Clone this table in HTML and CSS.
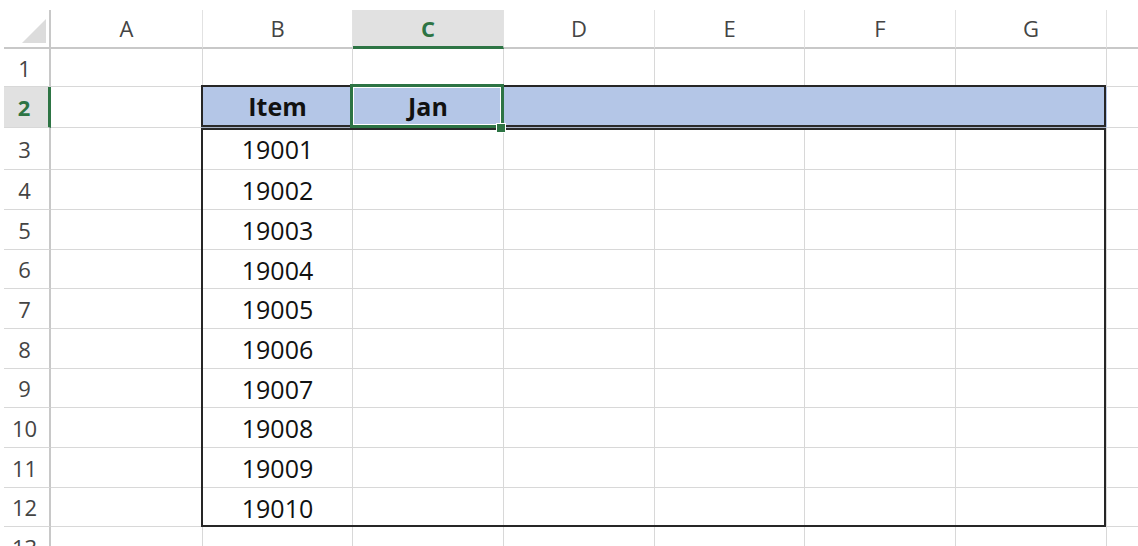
FILE: index.html
```html
<!DOCTYPE html>
<html>
<head>
<meta charset="utf-8">
<title>Sheet</title>
<link rel="stylesheet" href="styles.css">
</head>
<body>
<div class="sheet">
  <div class="grid">
    <div class="corner"><div class="tri"></div></div>
    <div class="ch">A</div><div class="ch">B</div><div class="ch sel">C</div><div class="ch">D</div><div class="ch">E</div><div class="ch">F</div><div class="ch">G</div><div class="ch"></div>

    <div class="rh">1</div><div class="c"></div><div class="c"></div><div class="c"></div><div class="c"></div><div class="c"></div><div class="c"></div><div class="c"></div><div class="c"></div>

    <div class="rh sel">2</div><div class="c"></div><div class="c th">Item</div><div class="c th">Jan</div><div class="c th"></div><div class="c th"></div><div class="c th"></div><div class="c th"></div><div class="c"></div>

    <div class="rh">3</div><div class="c"></div><div class="c num">19001</div><div class="c"></div><div class="c"></div><div class="c"></div><div class="c"></div><div class="c"></div><div class="c"></div>
    <div class="rh">4</div><div class="c"></div><div class="c num">19002</div><div class="c"></div><div class="c"></div><div class="c"></div><div class="c"></div><div class="c"></div><div class="c"></div>
    <div class="rh">5</div><div class="c"></div><div class="c num">19003</div><div class="c"></div><div class="c"></div><div class="c"></div><div class="c"></div><div class="c"></div><div class="c"></div>
    <div class="rh">6</div><div class="c"></div><div class="c num">19004</div><div class="c"></div><div class="c"></div><div class="c"></div><div class="c"></div><div class="c"></div><div class="c"></div>
    <div class="rh">7</div><div class="c"></div><div class="c num">19005</div><div class="c"></div><div class="c"></div><div class="c"></div><div class="c"></div><div class="c"></div><div class="c"></div>
    <div class="rh">8</div><div class="c"></div><div class="c num">19006</div><div class="c"></div><div class="c"></div><div class="c"></div><div class="c"></div><div class="c"></div><div class="c"></div>
    <div class="rh">9</div><div class="c"></div><div class="c num">19007</div><div class="c"></div><div class="c"></div><div class="c"></div><div class="c"></div><div class="c"></div><div class="c"></div>
    <div class="rh">10</div><div class="c"></div><div class="c num">19008</div><div class="c"></div><div class="c"></div><div class="c"></div><div class="c"></div><div class="c"></div><div class="c"></div>
    <div class="rh">11</div><div class="c"></div><div class="c num">19009</div><div class="c"></div><div class="c"></div><div class="c"></div><div class="c"></div><div class="c"></div><div class="c"></div>
    <div class="rh">12</div><div class="c"></div><div class="c num">19010</div><div class="c"></div><div class="c"></div><div class="c"></div><div class="c"></div><div class="c"></div><div class="c"></div>
    <div class="rh">13</div><div class="c"></div><div class="c"></div><div class="c"></div><div class="c"></div><div class="c"></div><div class="c"></div><div class="c"></div><div class="c"></div>
  </div>

  <div class="table-frame"></div>
  <div class="table-rule"></div>
  <div class="active-cell"></div>
  <div class="fill-handle"></div>
</div>
</body>
</html>
```

FILE: styles.css
```css
html, body {
  margin: 0;
  padding: 0;
  overflow: hidden;
  background: #ffffff;
  width: 1138px;
  height: 546px;
}

.sheet {
  position: relative;
  margin: 10px 0 0 4px;
  font-family: "Open Sans", "Liberation Sans", sans-serif;
}

.grid {
  display: grid;
  grid-template-columns: 47px 152px 150px 151px 151px 150px 151px 151px 40px;
  grid-template-rows: 39px 38px 41px 42px 40px 40px 39px 40px 40px 39px 40px 40px 39px 40px;
}

.grid > div {
  box-sizing: border-box;
  display: flex;
  align-items: center;
  justify-content: center;
  overflow: hidden;
  white-space: nowrap;
}

.corner {
  border-right: 2px solid #c8c8c8;
  border-bottom: 2px solid #c8c8c8;
  justify-content: flex-end !important;
  align-items: flex-end !important;
  padding: 0 3px 4px 0;
}

.tri {
  width: 24px;
  height: 24px;
  background: #dcdcdc;
  clip-path: polygon(100% 0, 100% 100%, 0 100%);
}

.ch {
  border-right: 1px solid #e2e2e2;
  border-bottom: 2px solid #c8c8c8;
  font-size: 22px;
  color: #444444;
  padding-bottom: 2px;
}

.ch.sel {
  background: #e1e1e1;
  border-bottom: 3px solid #2d7444;
  color: #2d7444;
  font-weight: 700;
  padding-bottom: 1px;
}

.rh {
  border-right: 2px solid #c8c8c8;
  border-bottom: 1px solid #d8d8d8;
  font-size: 22px;
  color: #444444;
  padding-right: 4px;
}

.rh.sel {
  background: #e1e1e1;
  border-right: 3px solid #2d7444;
  color: #2d7444;
  font-weight: 700;
}

.c {
  border-right: 1px solid #d8d8d8;
  border-bottom: 1px solid #d8d8d8;
  font-size: 25px;
  color: #111111;
}

.c.th {
  background: #b4c6e7;
  border-right-color: #b4c6e7;
  font-weight: 700;
  padding-bottom: 2px;
}

.c.num {
  padding-top: 1px;
}

.table-frame {
  position: absolute;
  left: 197px;
  top: 75px;
  width: 905px;
  height: 442px;
  box-sizing: border-box;
  border: 2px solid #262626;
}

.table-rule {
  position: absolute;
  left: 197px;
  top: 115px;
  width: 905px;
  height: 5px;
  box-sizing: border-box;
  border-top: 2px solid #2a2a2a;
  border-bottom: 2px solid #2a2a2a;
  background: #a9b3c6;
}

.active-cell {
  position: absolute;
  left: 346px;
  top: 74px;
  width: 154px;
  height: 44px;
  box-sizing: border-box;
  border: 3px solid #2d7444;
  box-shadow: inset 0 0 0 1px #ffffff;
}

.fill-handle {
  position: absolute;
  left: 493px;
  top: 114px;
  width: 8px;
  height: 8px;
  background: #2d7444;
  box-shadow: 0 0 0 1px #ffffff;
}
```
